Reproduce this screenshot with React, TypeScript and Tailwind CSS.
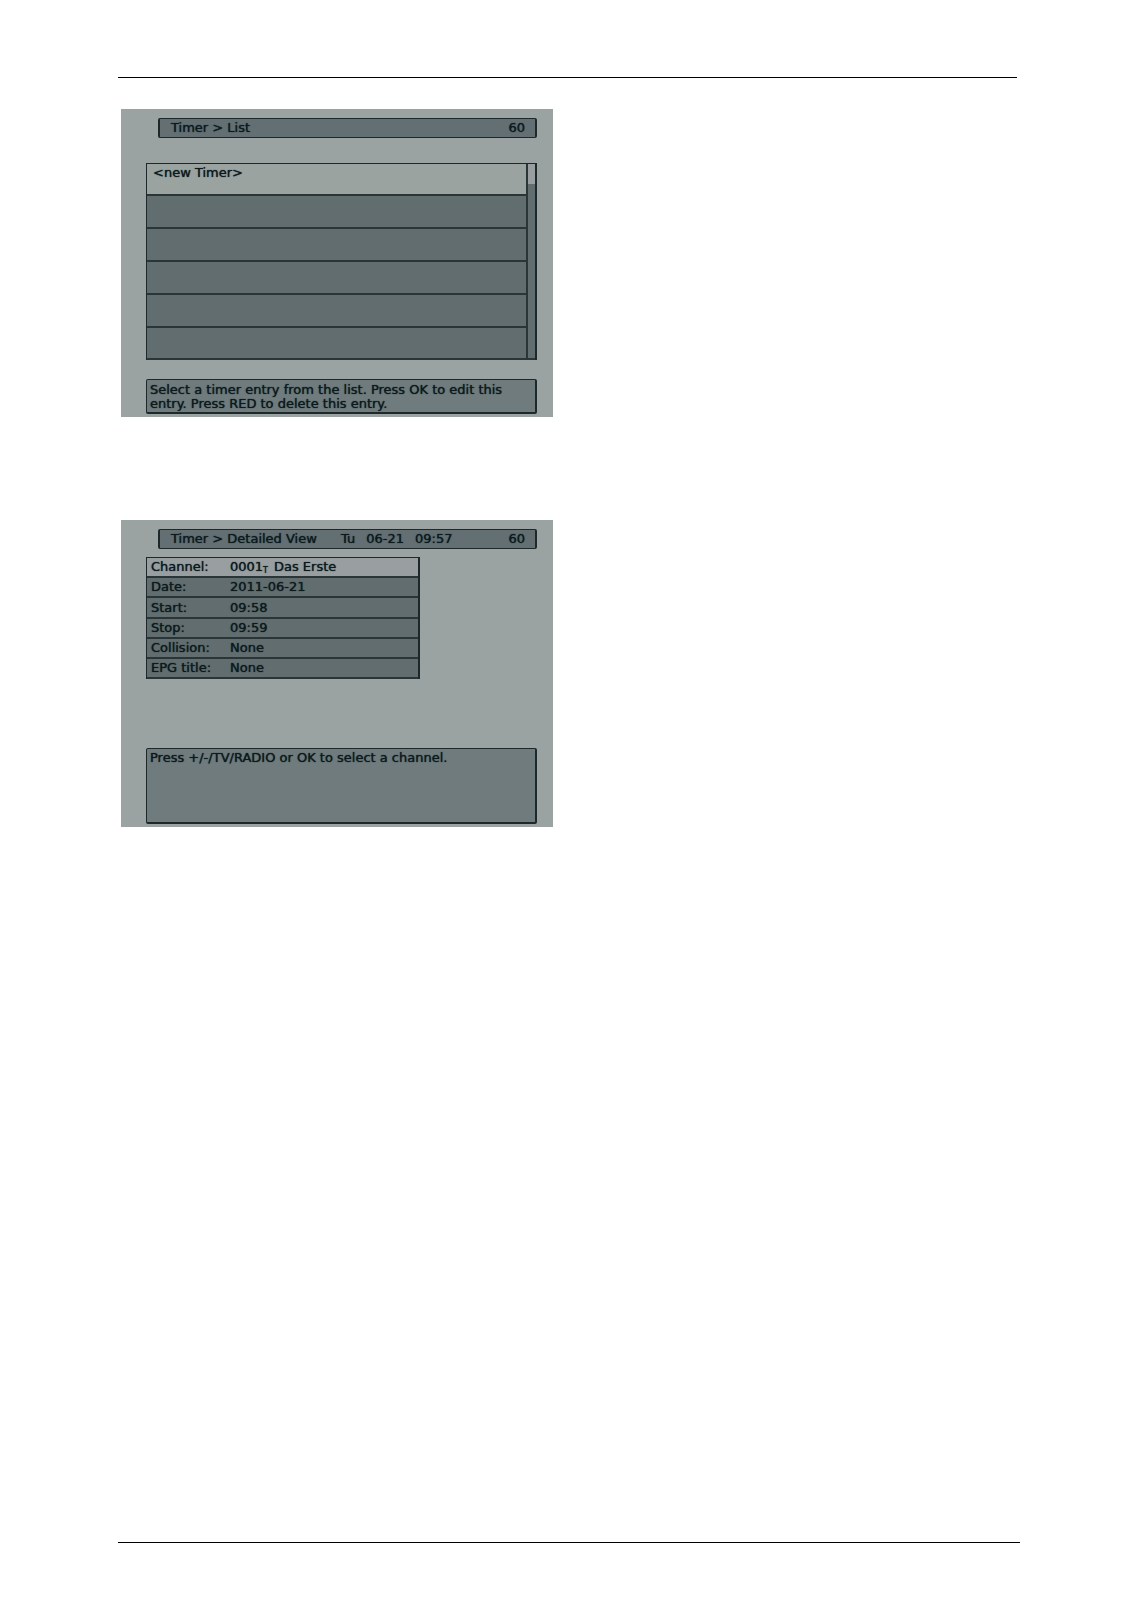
import type { ReactNode } from 'react';

const timers = ['<new Timer>', '', '', '', '', ''];

const details: { label: string; value: ReactNode }[] = [
  {
    label: 'Channel:',
    value: (
      <>
        0001<sub className="mr-1.5 text-[8px]">T</sub>Das Erste
      </>
    ),
  },
  { label: 'Date:', value: '2011-06-21' },
  { label: 'Start:', value: '09:58' },
  { label: 'Stop:', value: '09:59' },
  { label: 'Collision:', value: 'None' },
  { label: 'EPG title:', value: 'None' },
];

function Screen({ children }: { children: ReactNode }) {
  return (
    <section className="ml-[3px] flex w-full max-w-[432px] flex-col bg-[#9ba2a2] pt-[9px] pr-4 pb-[3px] pl-[25px]">
      {children}
    </section>
  );
}

function TitleBar({ title, date, time }: { title: string; date?: string; time?: string }) {
  return (
    <header className="ml-3 flex h-5 shrink-0 items-center rounded-xs border border-x-2 border-[#1d282b] bg-[#636f73] pr-[10px] pl-[11px]">
      <h2 className="w-[170px]">{title}</h2>
      {date && (
        <p className="flex gap-[11px]">
          <span>Tu</span>
          <span>{date}</span>
          <span>{time}</span>
        </p>
      )}
      <span className="ml-auto">60</span>
    </header>
  );
}

function HelpBox({ children, className }: { children: ReactNode; className: string }) {
  return (
    <p
      className={`rounded-xs border border-r-2 border-b-2 border-[#1d282b] bg-[#707b7d] pl-[3px] leading-[14px] ${className}`}
    >
      {children}
    </p>
  );
}

function TimerList() {
  return (
    <Screen>
      <TitleBar title="Timer > List" />
      <div className="mt-[25px] flex border border-r-2 border-b-0 border-[#1d282b] bg-[#626d6f]">
        <ul className="flex-1 border-r-2 border-[#2a3538]">
          {timers.map((timer, i) => (
            <li key={i} className="h-[33px] border-b-2 border-[#2a3538] first:h-8 first:bg-[#9ba3a1] last:h-8">
              {timer && (
                <button
                  type="button"
                  className="flex h-full w-full items-start pt-[1px] pl-[6px] text-left text-shadow-[0_0_1px_#0c1a1e]"
                >
                  {timer}
                </button>
              )}
            </li>
          ))}
        </ul>
        <div className="w-[7px] border-b-2 border-[#2a3538]">
          <div className="h-5 bg-[#999fa1]" />
        </div>
      </div>
      <HelpBox className="mt-[19px] min-h-[35px] pt-[3px]">
        Select a timer entry from the list. Press OK to edit this entry. Press RED to delete this entry.
      </HelpBox>
    </Screen>
  );
}

function TimerDetails() {
  return (
    <Screen>
      <TitleBar title="Timer > Detailed View" date="06-21" time="09:57" />
      <table className="mt-2 w-[274px] border-separate border-spacing-0 border border-r-2 border-b-0 border-[#1d282b] bg-[#626d6f]">
        <tbody>
          {details.map(({ label, value }) => (
            <tr key={label} className="h-5 leading-4 first:bg-[#999fa1] nth-3:h-[21px]">
              <th scope="row" className="w-[79px] border-b-2 border-[#2a3538] p-0 pl-1 text-left font-normal">
                {label}
              </th>
              <td className="border-b-2 border-[#2a3538] p-0 pl-1">{value}</td>
            </tr>
          ))}
        </tbody>
      </table>
      <HelpBox className="mt-[69px] min-h-[76px] pt-[2px]">Press +/-/TV/RADIO or OK to select a channel.</HelpBox>
    </Screen>
  );
}

export default function App() {
  return (
    <div className="flex min-h-screen flex-col bg-white pt-[77px] pr-[103px] pb-[75px] pl-[118px] font-['DejaVu_Sans',Verdana,sans-serif] text-[13px] leading-4 text-[#0c1a1e]">
      <hr className="mr-[3px] border-t border-black" />
      <main className="mt-[31px] flex flex-1 flex-col gap-[103px] text-shadow-[0_0_1px_#0c1a1e]">
        <TimerList />
        <TimerDetails />
      </main>
      <hr className="border-t border-black" />
    </div>
  );
}
